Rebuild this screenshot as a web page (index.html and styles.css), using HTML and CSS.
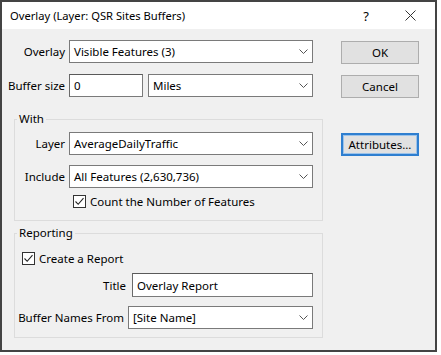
FILE: index.html
```html
<!DOCTYPE html>
<html>
<head>
<meta charset="utf-8">
<link rel="stylesheet" href="styles.css">
</head>
<body>
<div class="dialog">
  <div class="titlebar">
    <span class="title">Overlay (Layer: QSR Sites Buffers)</span>
    <span class="help">?</span>
    <span class="close"><svg width="11" height="11" viewBox="0 0 11 11"><path d="M0.5 0.5 L10.5 10.5 M10.5 0.5 L0.5 10.5" stroke="#333" stroke-width="1" fill="none"/></svg></span>
  </div>
  <div class="body">
    <div class="main">
      <div class="row">
        <span class="lbl top-lbl">Overlay</span>
        <div class="select w-full"><span class="val">Visible Features (3)</span><svg class="chev" width="9" height="5" viewBox="0 0 9 5"><polyline points="0.5,0.5 4.5,4.5 8.5,0.5" fill="none" stroke="#555" stroke-width="1"/></svg></div>
      </div>
      <div class="row row2">
        <span class="lbl top-lbl">Buffer size</span>
        <div class="input buf"><span class="val">0</span></div>
        <div class="select miles"><span class="val">Miles</span><svg class="chev" width="9" height="5" viewBox="0 0 9 5"><polyline points="0.5,0.5 4.5,4.5 8.5,0.5" fill="none" stroke="#555" stroke-width="1"/></svg></div>
      </div>
      <fieldset class="group with">
        <legend>With</legend>
        <div class="row first">
          <span class="lbl grp-lbl">Layer</span>
          <div class="select w-full"><span class="val">AverageDailyTraffic</span><svg class="chev" width="9" height="5" viewBox="0 0 9 5"><polyline points="0.5,0.5 4.5,4.5 8.5,0.5" fill="none" stroke="#555" stroke-width="1"/></svg></div>
        </div>
        <div class="row gap10">
          <span class="lbl grp-lbl">Include</span>
          <div class="select w-full"><span class="val">All Features (2,630,736)</span><svg class="chev" width="9" height="5" viewBox="0 0 9 5"><polyline points="0.5,0.5 4.5,4.5 8.5,0.5" fill="none" stroke="#555" stroke-width="1"/></svg></div>
        </div>
        <div class="check count">
          <span class="box"><svg width="11" height="11" viewBox="0 0 11 11"><polyline points="1.5,5.5 4.2,8.3 9.5,2.2" fill="none" stroke="#222" stroke-width="1.1"/></svg></span>
          <span>Count the Number of Features</span>
        </div>
      </fieldset>
      <fieldset class="group reporting">
        <legend>Reporting</legend>
        <div class="check create">
          <span class="box"><svg width="11" height="11" viewBox="0 0 11 11"><polyline points="1.5,5.5 4.2,8.3 9.5,2.2" fill="none" stroke="#222" stroke-width="1.1"/></svg></span>
          <span>Create a Report</span>
        </div>
        <div class="row title-row">
          <span class="lbl title-lbl">Title</span>
          <div class="input title-input"><span class="val">Overlay Report</span></div>
        </div>
        <div class="row names-row">
          <span class="lbl names-lbl">Buffer Names From</span>
          <div class="select names-sel"><span class="val">[Site Name]</span><svg class="chev" width="9" height="5" viewBox="0 0 9 5"><polyline points="0.5,0.5 4.5,4.5 8.5,0.5" fill="none" stroke="#555" stroke-width="1"/></svg></div>
        </div>
      </fieldset>
    </div>
    <div class="buttons">
      <div class="btn">OK</div>
      <div class="btn cancel">Cancel</div>
      <div class="btn attr">Attributes...</div>
    </div>
  </div>
</div>
</body>
</html>
```
FILE: styles.css
```css
* { box-sizing: border-box; }
html, body {
  margin: 0;
  padding: 0;
  background: #ffffff;
}
body {
  font-family: "Noto Sans", "Open Sans", sans-serif;
  font-size: 11.5px;
  color: #000;
}
.dialog {
  width: 437px;
  height: 352px;
  border: 2px solid #444;
  display: flex;
  flex-direction: column;
  background: #f0f0f0;
}
.titlebar {
  height: 27px;
  background: #fff;
  display: flex;
  align-items: center;
  padding-left: 8px;
  flex: none;
}
.title {
  flex: 1;
  font-size: 11.2px;
}
.help {
  width: 12px;
  text-align: center;
  margin-right: 33px;
  font-size: 13px;
}
.close {
  width: 11px;
  height: 11px;
  margin-right: 19px;
  display: flex;
}
.body {
  flex: 1;
  display: flex;
}
.main {
  width: 330px;
  padding-left: 6px;
  padding-top: 11px;
}
.row {
  display: flex;
  align-items: center;
  height: 23px;
}
.row2 { margin-top: 11px; }
.lbl {
  text-align: right;
  white-space: nowrap;
  flex: none;
}
.top-lbl { width: 57px; margin-right: 4px; }
.grp-lbl { width: 50px; margin-right: 4px; }
.select, .input {
  height: 23px;
  background: #fff;
  border: 1px solid #7a7a7a;
  display: flex;
  align-items: center;
  padding-left: 4px;
}
.input {
  border-top-color: #5a5a5a;
  border-left-color: #6a6a6a;
}
.val { flex: 1; white-space: nowrap; }
.chev { margin-right: 4px; flex: none; }
.w-full { width: 244px; }
.buf { width: 74px; margin-right: 5px; }
.miles { width: 165px; }
.group {
  margin: 14px 0 0 6px;
  width: 309px;
  border: 1px solid #dcdcdc;
  padding: 0 0 11px 0;
  min-width: 0;
}
.group legend {
  padding: 0 2px;
  margin-left: 2px;
  line-height: 16px;
  height: 16px;
}
.with .first { margin-top: 5px; }
.gap10 { margin-top: 10px; }
.check {
  display: flex;
  align-items: center;
  height: 16px;
}
.box {
  width: 13px;
  height: 13px;
  border: 1px solid #333;
  background: #fff;
  display: flex;
  align-items: center;
  justify-content: center;
  margin-right: 4px;
  flex: none;
}
.count { margin-top: 5px; margin-left: 58px; }
.reporting { margin-top: 4px; padding-bottom: 8px; }
.create { margin-top: 9px; margin-left: 7px; }
.title-row { margin-top: 7px; height: 24px; }
.title-lbl { width: 111px; margin-right: 6px; }
.title-input { width: 181px; height: 24px; }
.names-row { margin-top: 9px; }
.names-lbl { width: 109px; margin-right: 4px; }
.names-sel { width: 185px; }
.buttons {
  margin-left: 9px;
  padding-top: 12px;
  display: flex;
  flex-direction: column;
}
.btn {
  width: 78px;
  height: 23px;
  background: #e1e1e1;
  border: 1px solid #adadad;
  display: flex;
  align-items: center;
  justify-content: center;
}
.cancel { margin-top: 11px; }
.attr {
  margin-top: 35px;
  border: 2px solid #2f7fd0;
  box-shadow: inset 0 0 0 1px #9cc3ea;
}
```
